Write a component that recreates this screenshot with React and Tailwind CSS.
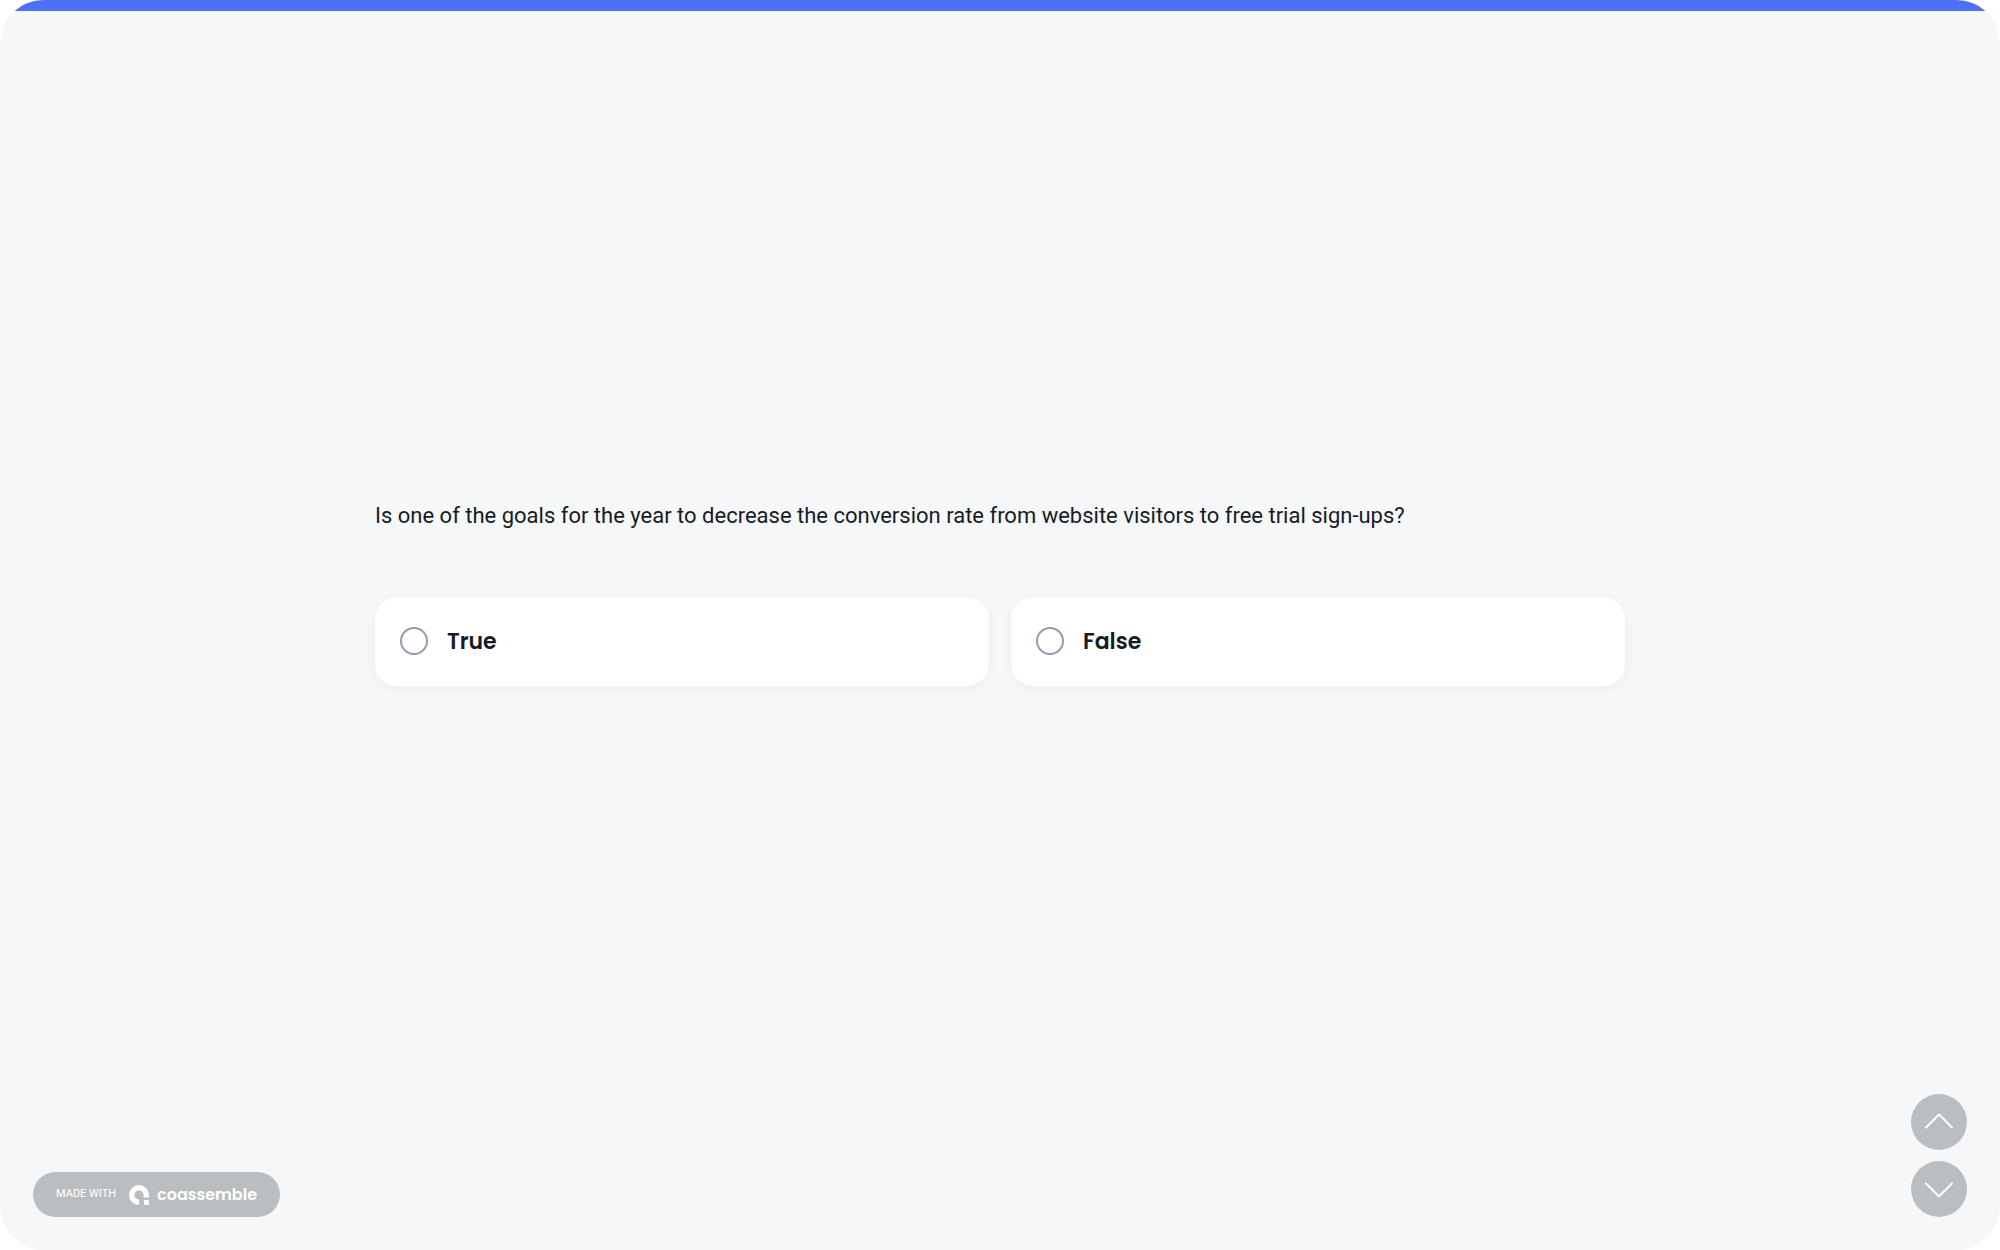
import React, { useState } from 'react';

const ANSWERS = ['True', 'False'];

function Logo() {
  return (
    <svg viewBox="0 0 20 20" className="h-5 w-5" fill="currentColor" aria-hidden="true">
      <path d="M10 20A10 10 0 1 1 20 10V12.5H14.6V10A4.6 4.6 0 1 0 10 14.6Z" />
      <rect x="15" y="15" width="5" height="5" />
    </svg>
  );
}

function NavButton({ label, points }) {
  return (
    <button
      type="button"
      aria-label={label}
      className="flex h-14 w-14 items-center justify-center rounded-full bg-[#bbbec1] text-white"
    >
      <svg viewBox="0 0 28 18" className="h-[18px] w-7" fill="none" stroke="currentColor" strokeWidth="2" strokeLinecap="round" strokeLinejoin="round">
        <polyline points={points} />
      </svg>
    </button>
  );
}

export default function App() {
  const [answer, setAnswer] = useState(null);

  return (
    <div className="bg-white font-['Roboto',sans-serif] text-[#161c26]">
      <div className="flex min-h-screen flex-col overflow-hidden rounded-[44px] bg-[#f6f7f9]">
        <div className="h-[11px] bg-[#4c6ff3]" />

        <main className="flex flex-1 flex-col justify-center pt-[79px]">
          <fieldset className="mx-auto w-5/8">
            <legend className="mb-[65px] text-[22px] leading-[33px]">
              Is one of the goals for the year to decrease the conversion rate from website visitors to free trial sign-ups?
            </legend>
            <div className="grid grid-cols-2 gap-[22px]">
              {ANSWERS.map((text) => (
                <label
                  key={text}
                  className="flex cursor-pointer items-center gap-[19px] rounded-[22px] bg-white px-[25px] py-7 shadow-[0_2px_12px_rgba(0,0,0,0.05)]"
                >
                  <input
                    type="radio"
                    name="answer"
                    checked={answer === text}
                    onChange={() => setAnswer(text)}
                    className="h-7 w-7 appearance-none rounded-full border-2 border-[#949cae] checked:border-8 checked:border-[#4c6ff3]"
                  />
                  <span className="font-['Poppins','Inter',sans-serif] text-[22px] leading-[33px] font-semibold">{text}</span>
                </label>
              ))}
            </div>
          </fieldset>
        </main>

        <footer className="flex items-end justify-between px-[33px] pb-[33px]">
          <a href="#" className="flex h-[45px] items-center rounded-full bg-[#bbbec1] px-[23px] text-white">
            <span className="mr-[13px] text-[11px]">MADE WITH</span>
            <Logo />
            <span className="ml-2 font-['Poppins','Inter',sans-serif] text-base leading-5 font-semibold">coassemble</span>
          </a>
          <nav className="flex flex-col gap-[11px]">
            <NavButton label="Previous" points="1,14.5 14,1.5 27,14.5" />
            <NavButton label="Next" points="1,3.5 14,16.5 27,3.5" />
          </nav>
        </footer>
      </div>
    </div>
  );
}
